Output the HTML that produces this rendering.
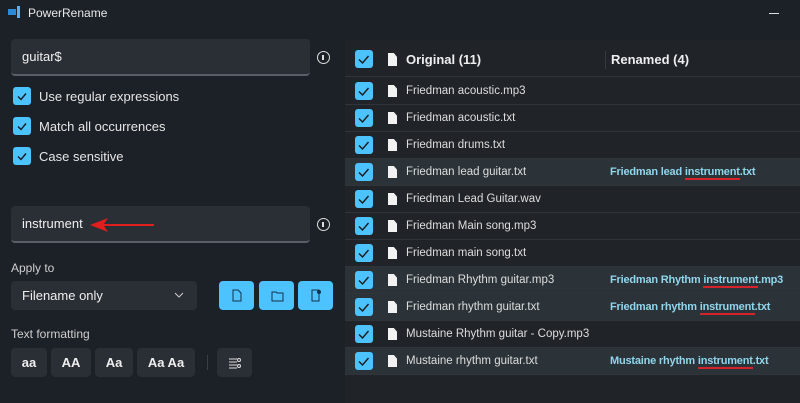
<!DOCTYPE html>
<html><head><style>
*{margin:0;padding:0;box-sizing:border-box}
body{width:800px;height:403px;background:#1c2027;font-family:"Liberation Sans",sans-serif;color:#e6e6e6;position:relative;overflow:hidden;font-size:12px}
.a{position:absolute}
.inp{background:#2a2e35;border-radius:4px;border-bottom:2px solid #5a5e66;font-size:13px;padding-left:11px;display:flex;align-items:center;color:#f0f0f0}
.cb{width:18px;height:18px;background:#4cc2ff;border-radius:3px}
.cb svg{display:block}
.info{width:13px;height:13px;border:1.5px solid #ddd;border-radius:50%}
.info:after{content:"";position:absolute;left:4.2px;top:2.5px;width:1.5px;height:5px;background:#ddd}
.btn{background:#2a2e35;border-radius:4px;display:flex;align-items:center;justify-content:center;font-weight:bold;font-size:13px;color:#eee}
.bb{background:#4cc2ff;border-radius:4px}
.row{position:absolute;left:345px;width:455px;height:27px;border-bottom:1px solid #30353b}
.row .cb{position:absolute;left:10px;top:4px}
.row .f{position:absolute;left:43px;top:7px;width:9px;height:12px;background:#f2f2f2;clip-path:polygon(0 0,65% 0,100% 30%,100% 100%,0 100%)}
.row .t{position:absolute;left:61px;top:7px;font-size:11.5px;color:#ddd}
.row .r{position:absolute;left:265px;top:7px;font-size:11px;color:#8fd6ec;font-weight:bold;letter-spacing:-0.2px}
.row .r u{text-decoration:none;border-bottom:2px solid #d4232b}
.hl{background:#2b3338}
</style></head><body>
<svg class="a" style="left:8px;top:6px" width="14" height="12"><rect x="0" y="3" width="8" height="6" fill="#2b8ad8"/><rect x="9" y="0" width="3" height="12" fill="#5ab0f0"/></svg>
<div class="a" style="left:28px;top:6px;font-size:12px;color:#e8e8e8">PowerRename</div>
<div class="a" style="left:769px;top:13px;width:10px;height:1px;background:#ddd"></div>

<div class="a inp" style="left:11px;top:39px;width:299px;height:37px">guitar$</div>
<div class="a info" style="left:317px;top:51px"></div>
<div class="a cb" style="left:13px;top:87px"><svg width="18" height="18"><path d="M5 9.5l3 3 5-6" stroke="#1a1a1a" stroke-width="1.4" fill="none"/></svg></div>
<div class="a" style="left:39px;top:89px;font-size:13px">Use regular expressions</div>
<div class="a cb" style="left:13px;top:117px"><svg width="18" height="18"><path d="M5 9.5l3 3 5-6" stroke="#1a1a1a" stroke-width="1.4" fill="none"/></svg></div>
<div class="a" style="left:39px;top:119px;font-size:13px">Match all occurrences</div>
<div class="a cb" style="left:13px;top:147px"><svg width="18" height="18"><path d="M5 9.5l3 3 5-6" stroke="#1a1a1a" stroke-width="1.4" fill="none"/></svg></div>
<div class="a" style="left:39px;top:149px;font-size:13px">Case sensitive</div>

<div class="a inp" style="left:11px;top:206px;width:299px;height:37px">instrument</div>
<svg class="a" style="left:88px;top:216px" width="70" height="18"><path d="M2 9L20 2L16 8L66 8L66 10L16 10L20 16Z" fill="#e01e1e"/></svg>
<div class="a info" style="left:317px;top:218px"></div>

<div class="a" style="left:11px;top:261px;font-size:12px;color:#cfcfcf">Apply to</div>
<div class="a btn" style="left:11px;top:281px;width:186px;height:29px;justify-content:flex-start;padding-left:11px;font-weight:normal">Filename only</div>
<svg class="a" style="left:174px;top:292px" width="10" height="6"><path d="M1 1l4 4 4-4" stroke="#ccc" fill="none"/></svg>
<div class="a bb" style="left:219px;top:281px;width:35px;height:29px"></div>
<div class="a bb" style="left:259px;top:281px;width:35px;height:29px"></div>
<div class="a bb" style="left:298px;top:281px;width:35px;height:29px"></div>
<svg class="a" style="left:219px;top:281px" width="120" height="29"><path d="M14 9h5l3 3v8h-8z" stroke="#13324a" fill="none"/><path d="M53 11h4l1 1h6v8h-11z" stroke="#13324a" fill="none"/><path d="M93 9h7v11h-7z" stroke="#13324a" fill="none"/><circle cx="100" cy="11" r="2" fill="#13324a"/></svg>

<div class="a" style="left:11px;top:327px;font-size:12px;color:#cfcfcf">Text formatting</div>
<div class="a btn" style="left:11px;top:348px;width:36px;height:29px">aa</div>
<div class="a btn" style="left:51px;top:348px;width:40px;height:29px">AA</div>
<div class="a btn" style="left:95px;top:348px;width:38px;height:29px">Aa</div>
<div class="a btn" style="left:137px;top:348px;width:58px;height:29px">Aa Aa</div>
<div class="a" style="left:207px;top:355px;width:1px;height:15px;background:#3a3e45"></div>
<div class="a btn" style="left:217px;top:348px;width:35px;height:29px"><svg width="14" height="14"><path d="M1 3h8M1 6h8M1 9h8M1 12h8" stroke="#ddd"/><circle cx="11" cy="4" r="1.5" stroke="#ddd" fill="none"/><circle cx="11" cy="10" r="1.5" stroke="#ddd" fill="none"/></svg></div>

<div class="a" style="left:345px;top:40px;width:455px;height:363px;background:#202428"></div>
<div class="row" style="top:45px;height:32px;border-bottom:1px solid #30353b">
<div class="cb" style="top:5px"><svg width="18" height="18"><path d="M4 9.5l3.5 3.5 6-7" stroke="#1a1a1a" stroke-width="1.4" fill="none"/></svg></div>
<div class="f" style="top:8px;height:13px"></div>
<div class="t" style="top:7px;font-weight:bold;font-size:13px;color:#eee">Original (11)</div>
<div class="a" style="left:260px;top:6px;width:1px;height:18px;background:#353a40"></div>
<div class="t" style="left:266px;top:7px;font-weight:bold;font-size:13px;color:#eee">Renamed (4)</div>
</div>
<div id="rows"></div>
<script>
var d=[["Friedman acoustic.mp3"],["Friedman acoustic.txt"],["Friedman drums.txt"],["Friedman lead guitar.txt","Friedman lead ","txt"],["Friedman Lead Guitar.wav"],["Friedman Main song.mp3"],["Friedman main song.txt"],["Friedman Rhythm guitar.mp3","Friedman Rhythm ","mp3"],["Friedman rhythm guitar.txt","Friedman rhythm ","txt"],["Mustaine Rhythm guitar - Copy.mp3"],["Mustaine rhythm guitar.txt","Mustaine rhythm ","txt"]];
var h="";d.forEach(function(r,i){h+='<div class="row'+(r[1]?' hl':'')+'" style="top:'+(78+27*i)+'px"><div class="cb"><svg width="18" height="18"><path d="M4 9.5l3.5 3.5 6-7" stroke="#1a1a1a" stroke-width="1.4" fill="none"/></svg></div><div class="f"></div><div class="t">'+r[0]+'</div>'+(r[1]?'<div class="r">'+r[1]+'<u>instrument</u>.'+r[2]+'</div>':'')+'</div>';});
document.getElementById("rows").innerHTML=h;
</script>
</body></html>
